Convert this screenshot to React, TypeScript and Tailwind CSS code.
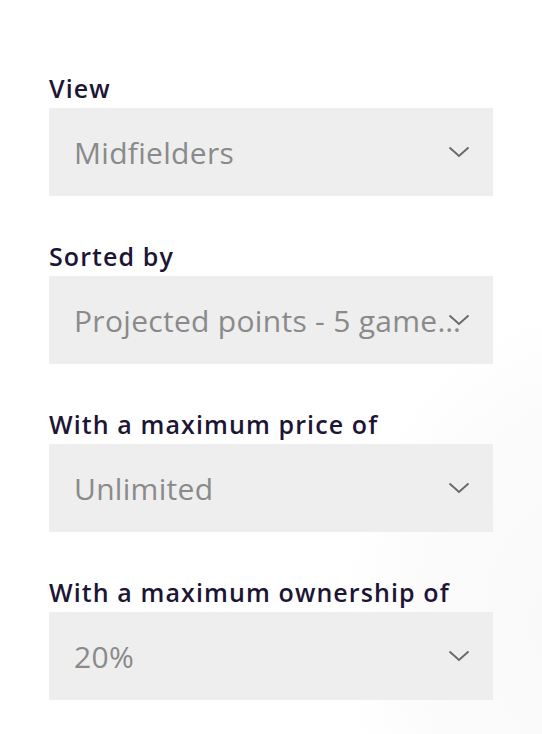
import { useState } from 'react';

interface Filter {
  id: string;
  label: string;
  value: string;
}

const filters: Filter[] = [
  { id: 'view', label: 'View', value: 'Midfielders' },
  { id: 'sort', label: 'Sorted by', value: 'Projected points - 5 gameweeks' },
  { id: 'price', label: 'With a maximum price of', value: 'Unlimited' },
  { id: 'ownership', label: 'With a maximum ownership of', value: '20%' },
];

function Chevron() {
  return (
    <svg width="22" height="12" viewBox="0 0 22 12" fill="none" className="text-[#6a6a6a]">
      <path d="M1.5 1.5 L11 10 L20.5 1.5" stroke="currentColor" strokeWidth="2" />
    </svg>
  );
}

export default function App() {
  const [values] = useState(filters);

  return (
    <div
      className="min-h-[734px] w-full pt-[72px] px-[49px] bg-[radial-gradient(ellipse_60%_55%_at_110%_85%,#f8f8f8_0%,#fbfbfb_50%,#ffffff_80%)]"
      style={{ fontFamily: '"Open Sans", Lato, sans-serif' }}
    >
      <div className="flex flex-col gap-[44px] w-[444px]">
        {values.map((f) => (
          <div key={f.id} className="flex flex-col gap-[4px]">
            <label className="text-[25px] leading-[32px] font-semibold tracking-[1.1px] text-[#1d1535]">
              {f.label}
            </label>
            <div className="relative h-[88px] bg-[#eeeeee] flex items-center pl-[25px] pr-[23px]">
              <span className="block overflow-hidden text-ellipsis whitespace-nowrap text-[30px] tracking-[0.3px] text-[#8a8a8a]">
                {f.value}
              </span>
              <div className="absolute right-[23px] top-1/2 -translate-y-1/2">
                <Chevron />
              </div>
            </div>
          </div>
        ))}
      </div>
    </div>
  );
}
